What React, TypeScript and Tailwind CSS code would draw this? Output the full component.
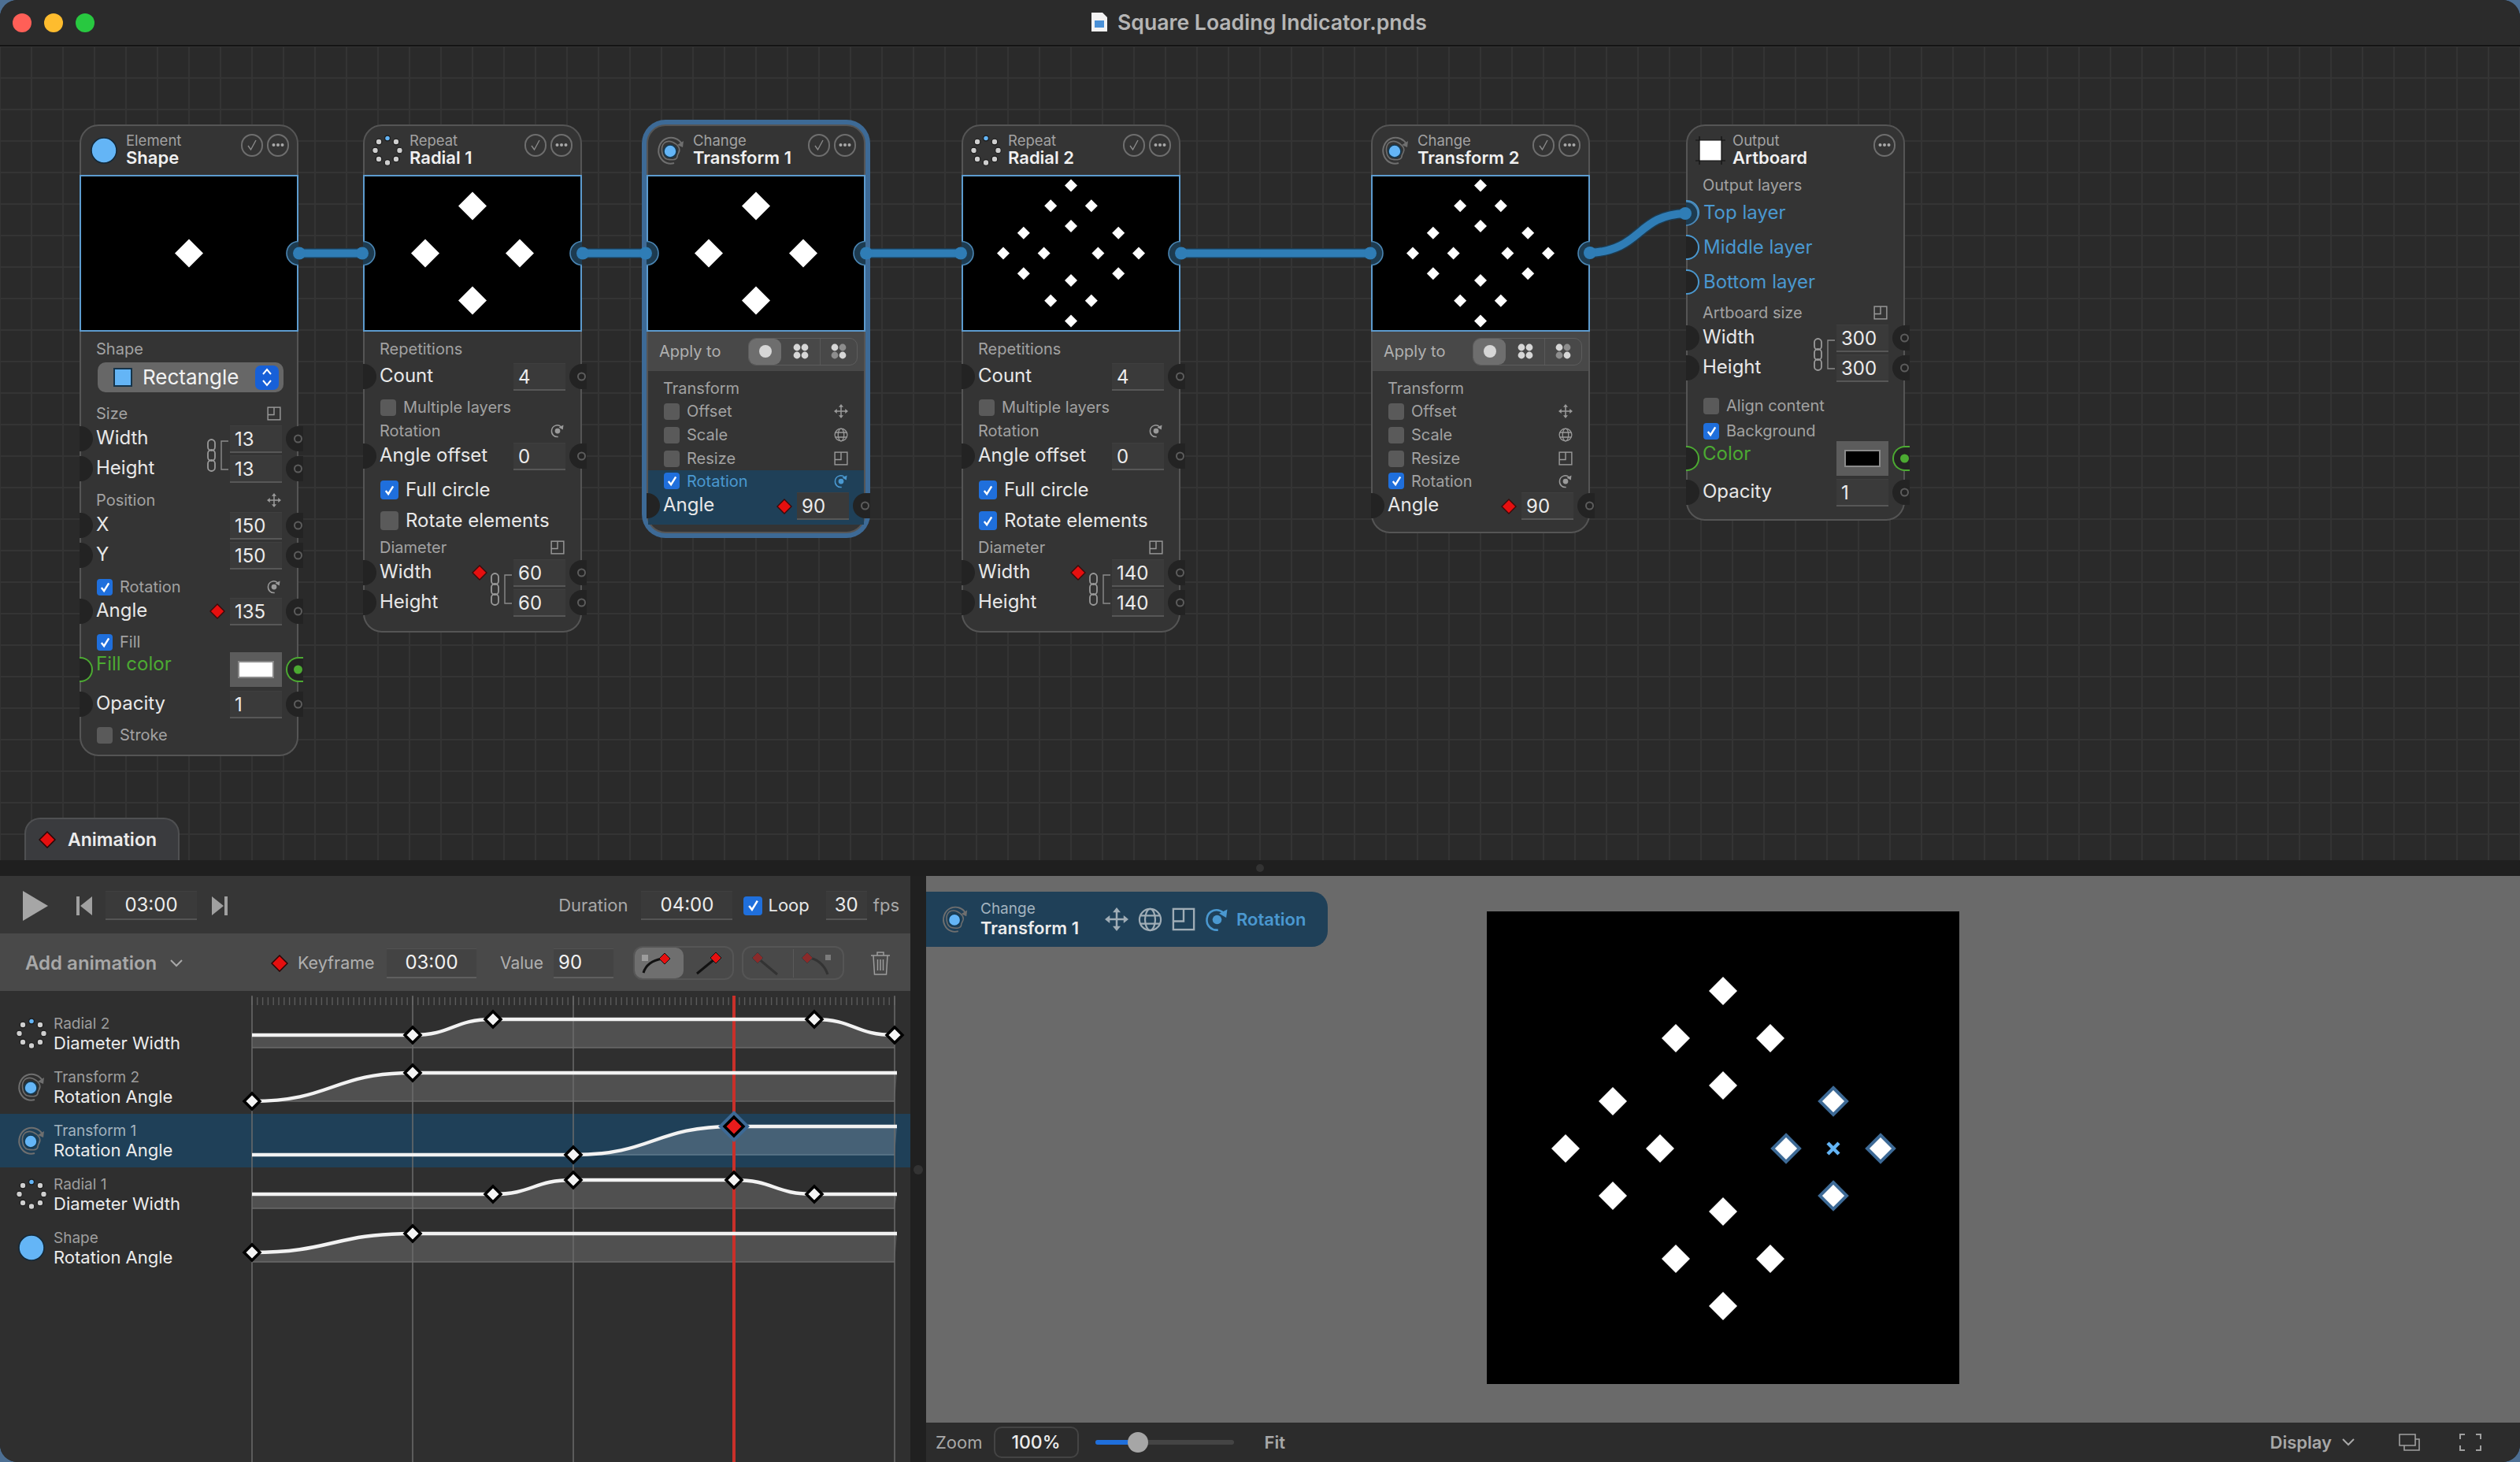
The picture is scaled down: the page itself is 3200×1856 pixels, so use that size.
import React from "react";

const pts = (x: number, y: number, h: number) => `${x},${y - h} ${x + h},${y} ${x},${y + h} ${x - h},${y}`;

const CROSS = [[0, -200], [-60, -140], [60, -140], [0, -80], [-140, -60], [140, -60], [-200, 0], [-80, 0], [80, 0], [200, 0], [-140, 60], [140, 60], [0, 80], [-60, 140], [60, 140], [0, 200]];
const FOUR = [[0, -60], [-60, 0], [60, 0], [0, 60]];

function RadialIcon({ size = 40 }: { size?: number }) {
  const d = Array.from({ length: 8 }, (_, i) => {
    const a = (i * Math.PI) / 4;
    return [20 + 15.5 * Math.sin(a), 20 - 15.5 * Math.cos(a), i];
  });
  return (
    <svg width={size} height={size} viewBox="0 0 40 40" className="shrink-0">
      {d.map(([x, y, i]) => (
        <circle key={i} cx={x} cy={y} r={i === 0 ? 3.4 : 3.8} fill={i === 0 ? "#64b5f6" : "#cfcfcf"} stroke="#1a1a1a" strokeWidth="1.2" />
      ))}
    </svg>
  );
}

function TransformIcon({ size = 40 }: { size?: number }) {
  return (
    <svg width={size} height={size} viewBox="0 0 40 40" fill="none" className="shrink-0">
      <path d="M34 12C30 5 22 2 14 5C5 9 2 20 6 28C10 36 18 38 24 36" stroke="#6f6f6f" strokeWidth="2" />
      <path d="M36 8L35 16L28 13Z" fill="#6f6f6f" />
      <path d="M12 10C18 6 26 10 30 16C33 22 28 23 28 28C27 33 19 32 15 31C8 29 6 15 12 10Z" stroke="#6f6f6f" strokeWidth="1.6" />
      <circle cx="19" cy="21" r="8" fill="#64b5f6" stroke="#15384f" strokeWidth="1.6" />
    </svg>
  );
}

function ShapeIcon({ size = 40 }: { size?: number }) {
  return (
    <svg width={size} height={size} viewBox="0 0 40 40" className="shrink-0">
      <circle cx="20" cy="20" r="16" fill="#64b5f6" stroke="#12293a" strokeWidth="1.6" />
    </svg>
  );
}

function ArtboardIcon() {
  return (
    <svg width="40" height="40" viewBox="0 0 40 40" className="shrink-0">
      <rect x="6" y="7" width="28" height="26" fill="#fff" />
      <path d="M1 7H39M1 33H39M6 2V38M34 2V38" stroke="#111" strokeWidth="1.2" />
    </svg>
  );
}

function MoveIcon({ s = 18, c = "#9a9a9a" }: { s?: number; c?: string }) {
  return (
    <svg width={s} height={s} viewBox="0 0 24 24" fill={c} className="shrink-0">
      <path d="M12 2V22M2 12H22" stroke={c} strokeWidth="2" />
      <path d="M12 0L16 5H8ZM12 24L8 19H16ZM0 12L5 8V16ZM24 12L19 16V8Z" />
    </svg>
  );
}
function GlobeIcon({ s = 18, c = "#9a9a9a" }: { s?: number; c?: string }) {
  return (
    <svg width={s} height={s} viewBox="0 0 24 24" fill="none" stroke={c} strokeWidth="1.7" className="shrink-0">
      <circle cx="12" cy="12" r="10.5" />
      <ellipse cx="12" cy="12" rx="5" ry="10.5" />
      <path d="M2.5 8H21.5M2.5 16H21.5" />
    </svg>
  );
}
function SizeIcon({ s = 18, c = "#9a9a9a" }: { s?: number; c?: string }) {
  return (
    <svg width={s} height={s} viewBox="0 0 24 24" fill="none" stroke={c} strokeWidth="1.9" className="shrink-0">
      <rect x="1.5" y="1.5" width="21" height="21" />
      <path d="M12 1.5V14H1.5" />
    </svg>
  );
}
function RotIcon({ s = 18, c = "#9a9a9a" }: { s?: number; c?: string }) {
  return (
    <svg width={s} height={s} viewBox="0 0 24 24" fill="none" className="shrink-0">
      <path d="M18 5C12 0 3 3 2 11C1 18 7 23 13 22" stroke={c} strokeWidth="2" />
      <path d="M22 2L21 10L14 6Z" fill={c} />
      <circle cx="12" cy="12" r="4.5" fill={c} />
    </svg>
  );
}

function Chain() {
  return (
    <svg width="30" height="42" viewBox="0 0 30 42" fill="none" className="absolute left-[160px] top-[19px]">
      <rect x="1" y="1" width="9" height="14" rx="4.5" stroke="#9a9a9a" strokeWidth="1.8" />
      <rect x="1" y="14" width="9" height="14" rx="4.5" stroke="#9a9a9a" strokeWidth="1.8" />
      <rect x="1" y="27" width="9" height="14" rx="4.5" stroke="#9a9a9a" strokeWidth="1.8" />
      <path d="M27 3H18V39H27" stroke="#8a8a8a" strokeWidth="1.4" />
    </svg>
  );
}

function SmallDia({ className }: { className: string }) {
  return (
    <svg width="20" height="22" viewBox="0 0 20 22" className={className}>
      <polygon points={pts(10, 11, 9)} fill="#e60f0f" stroke="#3a0a0a" strokeWidth="1.4" />
    </svg>
  );
}

type Kind = "plain" | "green" | "blue";

function SockL({ k = "plain" }: { k?: Kind }) {
  const cls =
    k === "green"
      ? "border-y-2 border-r-2 border-[#4caa32]"
      : k === "blue"
        ? "border-y-2 border-r-2 border-[#4a98d0]"
        : "";
  return <span className={`absolute left-[-2px] top-1/2 h-[32px] w-[17px] -translate-y-1/2 rounded-r-full bg-[#232323] ${cls}`} />;
}

function SockR({ k = "plain" }: { k?: Kind }) {
  const outer = k === "green" ? "border-y-2 border-l-2 border-[#4caa32]" : "";
  const ring = k === "green" ? "bg-[#4caa32] border-[#4caa32]" : "border-[#5c5c5c]";
  return (
    <span className={`absolute right-[-8px] top-1/2 h-[32px] w-[22px] -translate-y-1/2 rounded-l-full bg-[#232323] ${outer}`}>
      <span className={`absolute right-[1px] top-1/2 h-[11px] w-[11px] -translate-y-1/2 rounded-full border-2 ${ring}`} />
    </span>
  );
}

function Input({ children }: { children: React.ReactNode }) {
  return (
    <div className="flex h-[35px] w-[66px] items-center border-t border-b-2 border-t-[#3f3f3f] border-b-[#575757] bg-[#3a3a3a] pt-[2px] pl-[6px] text-[24px] text-[#ececec]">
      {children}
    </div>
  );
}

function Field({ label, value, h, dia, left = true, right = true, labelClass = "text-[#e8e8e8]" }: { label: string; value?: string; h: string; dia?: React.ReactNode; left?: boolean; right?: boolean; labelClass?: string }) {
  return (
    <div className={`relative flex items-center justify-between px-[19px] ${h}`}>
      {left && <SockL />}
      <span className={`-mt-[3px] text-[24px] ${labelClass}`}>{label}</span>
      {dia}
      {value !== undefined && <Input>{value}</Input>}
      {right && <SockR />}
    </div>
  );
}

function Section({ label, icon, className = "" }: { label: string; icon?: React.ReactNode; className?: string }) {
  return (
    <div className={`flex h-[26px] items-center justify-between pl-[19px] pr-[20px] text-[20px] text-[#a2a2a2] ${className}`}>
      <span>{label}</span>
      {icon}
    </div>
  );
}

function Box({ on, large }: { on?: boolean; large?: boolean }) {
  const size = large ? "h-[24px] w-[23px]" : "h-[21px] w-[20px]";
  return (
    <span className={`flex shrink-0 items-center justify-center rounded-[4px] ${size} ${on ? "bg-[#1f6fdc]" : "bg-[#5a5a5a]"}`}>
      {on && (
        <svg width="15" height="15" viewBox="0 0 16 16" fill="none">
          <path d="M3 8.5L6.5 13L13 2.5" stroke="#fff" strokeWidth="2.6" />
        </svg>
      )}
    </span>
  );
}

function Check({ label, on, className = "", icon, large, textClass }: { label: string; on?: boolean; className?: string; icon?: React.ReactNode; large?: boolean; textClass?: string }) {
  return (
    <div className={`flex items-center pl-[20px] pr-[20px] ${large ? "gap-[9px] text-[24px] text-[#e8e8e8]" : "gap-[9px] text-[20px] text-[#a2a2a2]"} ${className}`}>
      <Box on={on} large={large} />
      <span className={`flex-1 ${textClass ?? ""}`}>{label}</span>
      {icon}
    </div>
  );
}

function RoundBtn({ children }: { children: React.ReactNode }) {
  return <span className="flex h-[29px] w-[28px] items-center justify-center rounded-full border-2 border-[#6e6e6e]">{children}</span>;
}

function Node({ pos, icon, kicker, title, check = true, preview, children, sel }: { pos: string; icon: React.ReactNode; kicker: string; title: string; check?: boolean; preview?: number[][]; children: React.ReactNode; sel?: boolean }) {
  const isSmall = preview === CROSS;
  const f = isSmall ? 0.43 : 1;
  const half = isSmall ? 8 : 18;
  return (
    <div className={`absolute top-[99px] w-[278px] rounded-[24px] border-2 border-[#555555] bg-[#343434] ${pos} ${sel ? "ring-[6px] ring-[#3d6a96]" : ""}`}>
      <div className="flex h-[62px] items-center justify-between pl-[9px] pr-[10px]">
        <div className="flex items-center gap-[8px]">
          {icon}
          <div className="-mt-[4px] flex flex-col">
            <span className="text-[18.5px] leading-[22px] text-[#a2a2a2]">{kicker}</span>
            <span className="text-[22px] leading-[22px] font-semibold text-[#f0f0f0]">{title}</span>
          </div>
        </div>
        <div className="-mt-[14px] flex gap-[5px]">
          {check && (
            <RoundBtn>
              <svg width="16" height="16" viewBox="0 0 16 16" fill="none">
                <path d="M3 9L6.5 14L13 2" stroke="#8a8a8a" strokeWidth="1.4" />
              </svg>
            </RoundBtn>
          )}
          <RoundBtn>
            <svg width="16" height="6" viewBox="0 0 16 6" fill="#a8a8a8">
              <circle cx="2.5" cy="3" r="2" />
              <circle cx="8" cy="3" r="2" />
              <circle cx="13.5" cy="3" r="2" />
            </svg>
          </RoundBtn>
        </div>
      </div>
      {preview && (
        <div className="-mx-[2px] h-[199px] border-2 border-[#5d9bce] bg-black">
          <svg viewBox="0 0 274 195" className="block h-full w-full">
            {preview.map(([x, y], i) => (
              <polygon key={i} points={pts(137 + x * f, 97.5 + y * f, half)} fill="#fff" />
            ))}
          </svg>
        </div>
      )}
      {children}
    </div>
  );
}

function ApplyTo() {
  const d = (a: string, b: string) => (
    <svg width="20" height="20" viewBox="0 0 20 20">
      <circle cx="5" cy="5" r="4.4" fill={a} />
      <circle cx="15" cy="5" r="4.4" fill={b} />
      <circle cx="5" cy="15" r="4.4" fill={b} />
      <circle cx="15" cy="15" r="4.4" fill={a} />
    </svg>
  );
  return (
    <div className="flex h-[50px] items-center justify-between bg-[#484848] pl-[14px] pr-[8px] text-[20px] text-[#b0b0b0]">
      <span>Apply to</span>
      <div className="flex h-[35px] w-[139px] items-center rounded-[10px] border border-[#5d5d5d]">
        <span className="flex h-full w-[41px] items-center justify-center rounded-[9px] bg-[#6e6e6e]">
          <span className="h-[16px] w-[16px] rounded-full bg-[#d6d6d6]" />
        </span>
        <span className="flex h-full w-[50px] items-center justify-center border-r border-[#585858]">{d("#d6d6d6", "#d6d6d6")}</span>
        <span className="flex flex-1 items-center justify-center">{d("#d6d6d6", "#8d8d8d")}</span>
      </div>
    </div>
  );
}

function TransformBody({ active }: { active?: boolean }) {
  return (
    <>
      <ApplyTo />
      <Section label="Transform" className="mt-[9px]" />
      <Check label="Offset" className="mt-[1px] h-[30px]" icon={<MoveIcon />} />
      <Check label="Scale" className="h-[30px]" icon={<GlobeIcon />} />
      <Check label="Resize" className="h-[30px]" icon={<SizeIcon />} />
      <div className={`pb-[6px] ${active ? "bg-[#1f4058]" : ""}`}>
        <Check label="Rotation" on className="h-[27px]" textClass={active ? "text-[#4a98d0]" : ""} icon={<RotIcon c={active ? "#4a98d0" : "#9a9a9a"} />} />
        <Field label="Angle" value="90" h="h-[36px]" dia={<SmallDia className="absolute left-[163px] top-[8px]" />} />
      </div>
      <div className="h-[9px]" />
    </>
  );
}

function RadialBody({ rotate, size, dia }: { rotate: boolean; size: string; dia?: React.ReactNode }) {
  return (
    <div className="pt-[9px] pb-[17px]">
      <Section label="Repetitions" />
      <Field label="Count" value="4" h="mt-[4px] h-[36px]" />
      <Check label="Multiple layers" className="mt-[8px] h-[26px]" />
      <Section label="Rotation" className="mt-[4px]" icon={<RotIcon />} />
      <Field label="Angle offset" value="0" h="h-[38px]" />
      <Check label="Full circle" on large className="mt-[6px] h-[36px]" />
      <Check label="Rotate elements" on={rotate} large className="mt-[3px] h-[36px]" />
      <Section label="Diameter" className="mt-[3px]" icon={<SizeIcon />} />
      <div className="relative">
        <Field label="Width" value={size} h="h-[38px]" dia={dia} />
        <Field label="Height" value={size} h="h-[38px]" />
        <Chain />
      </div>
    </div>
  );
}

const WIRE = "#2f7db6";

function Wires() {
  const segs = [
    [379, 461],
    [739, 821],
    [1099, 1221],
    [1499, 1741],
  ];
  const inPort = (x: number, y: number) => <path d={`M${x} ${y - 15}A15 15 0 0 1 ${x} ${y + 15}`} fill="#1d3b50" stroke="#4a86b4" strokeWidth="1.6" />;
  const outPort = (x: number, y: number) => <path d={`M${x} ${y - 15}A15 15 0 0 0 ${x} ${y + 15}`} fill="#1d3b50" stroke="#4a86b4" strokeWidth="1.6" />;
  return (
    <svg viewBox="0 59 3200 1033" className="pointer-events-none absolute inset-0 h-full w-full" fill="none">
      {segs.map(([a, b]) => (
        <g key={a}>
          {outPort(a, 321.5)}
          {inPort(b, 321.5)}
          <path d={`M${a} 321.5H${b}`} stroke="#1d3b50" strokeWidth="13" />
          <path d={`M${a} 321.5H${b}`} stroke={WIRE} strokeWidth="10" />
          <circle cx={a + 1} cy="321.5" r="8" fill={WIRE} />
          <circle cx={b - 1} cy="321.5" r="8" fill={WIRE} />
        </g>
      ))}
      {outPort(2019, 321.5)}
      {inPort(2141, 271)}
      <path d="M2019 321C2085 318 2078 273 2140 271" stroke="#1d3b50" strokeWidth="13" />
      <path d="M2019 321C2085 318 2078 273 2140 271" stroke={WIRE} strokeWidth="10" />
      <circle cx="2019" cy="321" r="8" fill={WIRE} />
      <circle cx="2140" cy="271" r="8" fill={WIRE} />
    </svg>
  );
}

function Canvas() {
  return (
    <div className="relative h-[1033px] bg-[#2a2a2a] bg-[linear-gradient(#343434_2px,transparent_2px),linear-gradient(90deg,#343434_2px,transparent_2px)] bg-[size:40px_40px] bg-[position:-1px_-1px]">
      <Node pos="left-[101px]" icon={<ShapeIcon />} kicker="Element" title="Shape" preview={[[0, 0]]}>
        <div className="pt-[9px] pb-[12px]">
          <Section label="Shape" />
          <div className="mt-[4px] ml-[21px] flex h-[38px] w-[236px] items-center rounded-[10px] bg-[#676767] pl-[20px] pr-[6px] text-[26px] text-[#f2f2f2]">
            <span className="h-[24px] w-[24px] border-2 border-[#16344a] bg-[#64b5f6]" />
            <span className="-mt-[2px] ml-[13px] flex-1">Rectangle</span>
            <span className="flex h-[31px] w-[30px] items-center justify-center rounded-[7px] bg-[#1760d8]">
              <svg width="14" height="26" viewBox="0 0 14 26" fill="none" stroke="#fff" strokeWidth="2">
                <path d="M2 9L7 3L12 9M2 17L7 23L12 17" />
              </svg>
            </span>
          </div>
          <Section label="Size" className="mt-[14px]" icon={<SizeIcon />} />
          <div className="relative">
            <Field label="Width" value="13" h="h-[38px]" />
            <Field label="Height" value="13" h="h-[38px]" />
            <Chain />
          </div>
          <Section label="Position" className="mt-[8px]" icon={<MoveIcon />} />
          <Field label="X" value="150" h="h-[38px]" />
          <Field label="Y" value="150" h="h-[38px]" />
          <Check label="Rotation" on className="mt-[8px] h-[26px]" icon={<RotIcon />} />
          <Field label="Angle" value="135" h="h-[36px]" dia={<SmallDia className="absolute left-[163px] top-[7px]" />} />
          <Check label="Fill" on className="mt-[8px] h-[26px]" />
          <div className="relative flex h-[44px] items-center justify-between px-[19px]">
            <SockL k="green" />
            <span className="-mt-[14px] text-[24px] text-[#4caa32]">Fill color</span>
            <span className="flex h-[44px] w-[66px] items-center justify-center bg-[#5c5c5c]">
              <span className="h-[22px] w-[46px] border-2 border-[#8a8a8a] bg-white" />
            </span>
            <SockR k="green" />
          </div>
          <Field label="Opacity" value="1" h="mt-[2px] h-[40px]" />
          <Check label="Stroke" className="mt-[6px] h-[26px]" />
        </div>
      </Node>

      <Node pos="left-[461px]" icon={<RadialIcon />} kicker="Repeat" title="Radial 1" preview={FOUR}>
        <RadialBody rotate={false} size="60" dia={<SmallDia className="absolute left-[136px] top-[8px]" />} />
      </Node>

      <Node pos="left-[821px]" sel icon={<TransformIcon />} kicker="Change" title="Transform 1" preview={FOUR}>
        <TransformBody active />
      </Node>

      <Node pos="left-[1221px]" icon={<RadialIcon />} kicker="Repeat" title="Radial 2" preview={CROSS}>
        <RadialBody rotate size="140" dia={<SmallDia className="absolute left-[136px] top-[8px]" />} />
      </Node>

      <Node pos="left-[1741px]" icon={<TransformIcon />} kicker="Change" title="Transform 2" preview={CROSS}>
        <TransformBody />
      </Node>

      <Node pos="left-[2141px]" icon={<ArtboardIcon />} kicker="Output" title="Artboard" check={false}>
        <div className="pb-[15px]">
          <Section label="Output layers" />
          {["Top layer", "Middle layer", "Bottom layer"].map((l) => (
            <div key={l} className="relative flex h-[44px] items-center pl-[20px] text-[24px] text-[#4a98d0]">
              <SockL k="blue" />
              {l}
            </div>
          ))}
          <Section label="Artboard size" className="mt-[4px]" icon={<SizeIcon />} />
          <div className="relative">
            <Field label="Width" value="300" h="h-[38px]" />
            <Field label="Height" value="300" h="h-[38px]" />
            <Chain />
          </div>
          <Check label="Align content" className="mt-[16px] h-[26px]" />
          <Check label="Background" on className="mt-[6px] h-[26px]" />
          <div className="relative flex h-[44px] items-center justify-between px-[19px]">
            <SockL k="green" />
            <span className="-mt-[12px] text-[24px] text-[#4caa32]">Color</span>
            <span className="flex h-[44px] w-[66px] items-center justify-center bg-[#5c5c5c]">
              <span className="h-[22px] w-[46px] border-2 border-[#8a8a8a] bg-black" />
            </span>
            <SockR k="green" />
          </div>
          <Field label="Opacity" value="1" h="mt-[2px] h-[38px]" />
        </div>
      </Node>

      <Wires />

      <div className="absolute bottom-0 left-[31px] flex h-[54px] w-[197px] items-center gap-[15px] rounded-t-[20px] border-x-2 border-t-2 border-[#4f5052] bg-[#3a3b3e] pl-[16px] text-[23px] font-semibold text-[#ececec]">
        <svg width="22" height="22" viewBox="0 0 22 22">
          <polygon points={pts(11, 11, 10)} fill="#e60f0f" stroke="#2a0505" strokeWidth="1.5" />
        </svg>
        Animation
      </div>
    </div>
  );
}

function TimeBox({ className, children }: { className: string; children: React.ReactNode }) {
  return <div className={`flex h-[37px] items-center justify-center border-t border-b-2 border-t-[#3f3f3f] border-b-[#555] bg-[#3a3a3a] text-[24px] text-[#ececec] ${className}`}>{children}</div>;
}

function TopBar() {
  return (
    <div className="flex h-[73px] items-center bg-[#363636] pl-[29px] pr-[14px] pt-[2px]">
      <svg width="32" height="38" viewBox="0 0 32 38" fill="#a6a6a6">
        <path d="M0 0L32 19L0 38Z" />
      </svg>
      <svg width="20" height="24" viewBox="0 0 20 24" fill="#a0a0a0" className="ml-[36px]">
        <path d="M0 0H4V24H0ZM20 0V24L5 12Z" />
      </svg>
      <TimeBox className="ml-[17px] w-[116px]">03:00</TimeBox>
      <svg width="20" height="24" viewBox="0 0 20 24" fill="#a0a0a0" className="ml-[19px]">
        <path d="M16 0H20V24H16ZM0 0V24L15 12Z" />
      </svg>
      <div className="flex-1" />
      <span className="text-[22px] text-[#a8a8a8]">Duration</span>
      <TimeBox className="ml-[17px] w-[116px]">04:00</TimeBox>
      <span className="ml-[14px] flex h-[24px] w-[24px] items-center justify-center rounded-[4px] bg-[#1f6fdc]">
        <svg width="17" height="17" viewBox="0 0 16 16" fill="none">
          <path d="M3 8.5L6.5 13L13 2.5" stroke="#fff" strokeWidth="2.4" />
        </svg>
      </span>
      <span className="ml-[7px] text-[22px] text-[#e8e8e8]">Loop</span>
      <TimeBox className="ml-[21px] w-[52px]">30</TimeBox>
      <span className="ml-[8px] text-[22px] text-[#a8a8a8]">fps</span>
    </div>
  );
}

function SecondBar() {
  return (
    <div className="flex h-[73px] items-center bg-[#494949] pl-[32px] pt-[2px]">
      <span className="w-[174px] text-[24px] font-semibold text-[#a8a8a8]">Add animation</span>
      <svg width="16" height="10" viewBox="0 0 16 10" fill="none" stroke="#a8a8a8" strokeWidth="2" className="ml-[10px]">
        <path d="M1 1L8 8L15 1" />
      </svg>
      <svg width="22" height="22" viewBox="0 0 22 22" className="ml-[112px]">
        <polygon points={pts(11, 11, 10)} fill="#e60f0f" stroke="#2a0505" strokeWidth="1.5" />
      </svg>
      <span className="ml-[12px] w-[100px] text-[21.5px] text-[#b0b0b0]">Keyframe</span>
      <div className="ml-[13px] flex h-[38px] w-[114px] items-center justify-center border-t border-b-2 border-t-[#525252] border-b-[#5f5f5f] bg-[#434343] text-[24px] text-[#f2f2f2]">03:00</div>
      <span className="ml-[30px] w-[58px] text-[21px] text-[#b0b0b0]">Value</span>
      <div className="ml-[10px] flex h-[38px] w-[76px] items-center border-t border-b-2 border-t-[#525252] border-b-[#5f5f5f] bg-[#434343] pl-[6px] text-[24px] text-[#f2f2f2]">90</div>
      <div className="ml-[25px] flex h-[43px] w-[128px] rounded-[12px] border-2 border-[#555]">
        <span className="flex h-full w-[62px] items-center justify-center rounded-[10px] bg-[#6f6f6f]">
          <svg width="52" height="40" viewBox="0 0 52 40" fill="none">
            <rect x="4" y="9" width="8" height="8" fill="#9c9c9c" />
            <path d="M6 32C9 22 18 16 30 14" stroke="#111" strokeWidth="3" />
            <polygon points={pts(33, 14, 7)} fill="#e60f0f" stroke="#111" strokeWidth="1" />
          </svg>
        </span>
        <span className="flex flex-1 items-center justify-center">
          <svg width="52" height="40" viewBox="0 0 52 40" fill="none">
            <path d="M12 33L34 15" stroke="#111" strokeWidth="3" />
            <polygon points={pts(36, 13, 7)} fill="#e60f0f" stroke="#111" strokeWidth="1" />
          </svg>
        </span>
      </div>
      <div className="ml-[10px] flex h-[43px] w-[130px] items-center rounded-[12px] border-2 border-[#555]">
        <span className="flex flex-1 items-center justify-center border-r border-[#5a5a5a]">
          <svg width="52" height="36" viewBox="0 0 52 36" fill="none">
            <path d="M14 12L38 32" stroke="#333" strokeWidth="3" />
            <polygon points={pts(13, 11, 7)} fill="#8a2a2a" stroke="#3c3c3c" strokeWidth="1" />
          </svg>
        </span>
        <span className="flex flex-1 items-center justify-center">
          <svg width="52" height="36" viewBox="0 0 52 36" fill="none">
            <path d="M12 11C24 11 34 20 38 32" stroke="#333" strokeWidth="3" />
            <polygon points={pts(12, 11, 7)} fill="#8a2a2a" stroke="#3c3c3c" strokeWidth="1" />
            <rect x="35" y="7" width="7" height="7" fill="#7c7c7c" />
          </svg>
        </span>
      </div>
      <svg width="26" height="31" viewBox="0 0 26 31" fill="none" stroke="#9c9c9c" strokeWidth="1.5" className="ml-[33px]">
        <path d="M1 6H25M9 6V2H17V6M4 6L5.5 30H20.5L22 6M9.5 11V25M13 11V25M16.5 11V25" />
      </svg>
    </div>
  );
}

function TrackLabel({ icon, top, bottom, active }: { icon: React.ReactNode; top: string; bottom: string; active?: boolean }) {
  return (
    <div className={`flex h-[68px] items-center gap-[8px] pl-[20px] ${active ? "bg-[#1f4058]" : ""}`}>
      {icon}
      <div className="flex flex-col">
        <span className={`text-[19px] leading-[24px] ${active ? "text-[#a3b3bf]" : "text-[#9e9e9e]"}`}>{top}</span>
        <span className="text-[22px] leading-[25px] text-[#ececec]">{bottom}</span>
      </div>
    </div>
  );
}

function Key({ x, y }: { x: number; y: number }) {
  return <polygon points={pts(x, y, 10)} fill="#f4f4f4" stroke="#000" strokeWidth="3.5" />;
}

function ease(x1: number, y1: number, x2: number, y2: number) {
  const m = (x1 + x2) / 2;
  return `C${m} ${y1} ${m} ${y2} ${x2} ${y2}`;
}

function Graph() {
  const ticks: number[] = [];
  for (let x = 320; x <= 1136; x += 6.8) ticks.push(x);
  const tracks = [
    { d: `M320 56 H524 ${ease(524, 56, 626, 36)} H1034 ${ease(1034, 36, 1136, 56)}`, bot: 72, keys: [[524, 56], [626, 36], [1034, 36], [1136, 56]], end: 1136 },
    { d: `M320 140 ${ease(320, 140, 524, 104)} H1139`, bot: 140, keys: [[320, 140], [524, 104]], end: 1139 },
    { d: `M320 208 H728 ${ease(728, 208, 932, 172)} H1139`, bot: 208, keys: [[728, 208]], end: 1139, active: true },
    { d: `M320 258 H626 ${ease(626, 258, 728, 240)} H932 ${ease(932, 240, 1034, 258)} H1139`, bot: 276, keys: [[626, 258], [728, 240], [932, 240], [1034, 258]], end: 1139 },
    { d: `M320 332 ${ease(320, 332, 524, 308)} H1139`, bot: 344, keys: [[320, 332], [524, 308]], end: 1139 },
  ];
  return (
    <svg width="1156" height="598" viewBox="0 0 1156 598" fill="none" className="absolute left-0 top-0">
      {tracks.map((t, i) => (
        <g key={i}>
          <path d={`${t.d} L1136 ${t.bot} H320 Z`} fill={t.active ? "#466176" : "#505050"} />
          <path d={`M320 ${t.bot}H1136`} stroke={t.active ? "#5f7a8d" : "#6a6a6a"} strokeWidth="1.5" />
        </g>
      ))}
      {ticks.map((x, i) => (
        <path key={i} d={`M${x} 8V18`} stroke="#5a5a5a" strokeWidth="1.4" />
      ))}
      {[320, 524, 728, 932, 1136].map((x) => (
        <path key={x} d={`M${x} 6V598`} stroke="#6b6b6b" strokeWidth="1.5" />
      ))}
      <path d="M932 6V598" stroke="#c9302a" strokeWidth="4" />
      {tracks.map((t, i) => (
        <path key={i} d={t.d} stroke="#f2f2f2" strokeWidth="4.5" />
      ))}
      {tracks.flatMap((t, i) => t.keys.map(([x, y]) => <Key key={`${i}-${x}`} x={x} y={y} />))}
      <polygon points={pts(932, 172, 20)} fill="#3d6a96" />
      <polygon points={pts(932, 172, 12)} fill="#e81c1c" stroke="#000" strokeWidth="3.5" />
    </svg>
  );
}

function Timeline() {
  return (
    <div className="flex h-[744px] w-[1156px] shrink-0 flex-col bg-[#2f2f2f]">
      <TopBar />
      <SecondBar />
      <div className="relative flex-1 pt-[20px]">
        <TrackLabel icon={<RadialIcon />} top="Radial 2" bottom="Diameter Width" />
        <TrackLabel icon={<TransformIcon />} top="Transform 2" bottom="Rotation Angle" />
        <TrackLabel icon={<TransformIcon />} top="Transform 1" bottom="Rotation Angle" active />
        <TrackLabel icon={<RadialIcon />} top="Radial 1" bottom="Diameter Width" />
        <TrackLabel icon={<ShapeIcon />} top="Shape" bottom="Rotation Angle" />
        <Graph />
      </div>
    </div>
  );
}

function Viewer() {
  const sel = new Set(["140,-60", "80,0", "200,0", "140,60"]);
  return (
    <div className="flex flex-1 flex-col">
      <div className="relative flex flex-1 justify-center bg-[#6a6a6a] pt-[45px]">
        <div className="absolute left-0 top-[20px] flex h-[70px] w-[510px] items-center rounded-r-[20px] bg-[#1f4058] pl-[18px]">
          <TransformIcon size={38} />
          <div className="ml-[13px] -mt-[2px] flex w-[150px] flex-col">
            <span className="text-[19px] leading-[24px] text-[#a3b3bf]">Change</span>
            <span className="text-[22px] leading-[24px] font-semibold whitespace-nowrap text-[#ececec]">Transform 1</span>
          </div>
          <div className="ml-[8px] flex items-center gap-[12px]">
            <MoveIcon s={30} c="#a0adb6" />
            <GlobeIcon s={31} c="#a0adb6" />
            <SizeIcon s={30} c="#a0adb6" />
            <RotIcon s={31} c="#4a98d0" />
          </div>
          <span className="ml-[9px] text-[22px] font-semibold text-[#4a98d0]">Rotation</span>
        </div>
        <div className="h-[600px] w-[600px] bg-black">
          <svg viewBox="0 0 600 600" className="h-full w-full">
            {CROSS.map(([x, y], i) => {
              const on = sel.has(`${x},${y}`);
              return <polygon key={i} points={pts(300 + x, 301 + y, on ? 17 : 18)} fill="#fff" stroke={on ? "#3d6a96" : "none"} strokeWidth="4" />;
            })}
            <path d="M433 294L447 308M447 294L433 308" stroke="#64b5f6" strokeWidth="4.5" />
          </svg>
        </div>
      </div>
      <div className="flex h-[50px] items-center bg-[#2c2c2c] pl-[12px] pr-[49px] text-[22px] text-[#a8a8a8]">
        <span>Zoom</span>
        <div className="ml-[14px] flex h-[40px] w-[108px] items-center justify-center rounded-[10px] border-2 border-[#444] text-[23px] font-medium text-[#ececec]">100%</div>
        <div className="relative ml-[21px] h-[6px] w-[176px] rounded-full bg-[#444]">
          <div className="h-full w-[50px] rounded-full bg-[#1f6fdc]" />
          <div className="absolute left-[41px] top-1/2 h-[26px] w-[26px] -translate-y-1/2 rounded-full bg-[#a6a6a6]" />
        </div>
        <span className="ml-[39px] font-semibold">Fit</span>
        <div className="flex-1" />
        <span className="font-semibold">Display</span>
        <svg width="16" height="10" viewBox="0 0 16 10" fill="none" stroke="#a8a8a8" strokeWidth="2" className="ml-[13px]">
          <path d="M1 1L8 8L15 1" />
        </svg>
        <svg width="27" height="22" viewBox="0 0 27 22" fill="none" stroke="#a0a0a0" strokeWidth="1.6" className="ml-[56px]">
          <path d="M1 1H21V15H1ZM7 15V21H26V7H21" />
        </svg>
        <svg width="28" height="22" viewBox="0 0 28 22" fill="none" stroke="#a0a0a0" strokeWidth="2" className="ml-[50px]">
          <path d="M1 7V1H7M21 1H27V7M27 15V21H21M7 21H1V15" />
        </svg>
      </div>
    </div>
  );
}

export default function App() {
  return (
    <div className="h-[1856px] w-[3200px] overflow-hidden bg-[#4d6f93] [font-family:Inter,sans-serif]">
      <div className="h-full w-full overflow-hidden rounded-[22px] bg-[#202020]">
        <div className="flex h-[59px] items-center border-b-2 border-[#141414] bg-[#2b2b2b] pl-[16px]">
          <span className="h-[24px] w-[24px] rounded-full bg-[#ff5f57]" />
          <span className="ml-[16px] h-[24px] w-[24px] rounded-full bg-[#febc2e]" />
          <span className="ml-[16px] h-[24px] w-[24px] rounded-full bg-[#28c840]" />
          <div className="ml-[1264px] flex items-center gap-[11px] text-[26.6px] font-semibold text-[#b5b5b5]">
            <svg width="24" height="26" viewBox="0 0 24 26">
              <path d="M2 1H16L22 7V25H2Z" fill="#f2f2f2" />
              <rect x="6" y="11" width="12" height="9" fill="#4a90d6" />
            </svg>
            Square Loading Indicator.pnds
          </div>
        </div>
        <Canvas />
        <div className="relative h-[20px] bg-[#1f1f1f]">
          <span className="absolute left-[1595px] top-[5px] h-[10px] w-[10px] rounded-full bg-[#333]" />
        </div>
        <div className="flex h-[744px]">
          <Timeline />
          <div className="relative w-[20px] shrink-0 bg-[#202020]">
            <span className="absolute left-[4px] top-[367px] h-[12px] w-[12px] rounded-full bg-[#333]" />
          </div>
          <Viewer />
        </div>
      </div>
    </div>
  );
}
